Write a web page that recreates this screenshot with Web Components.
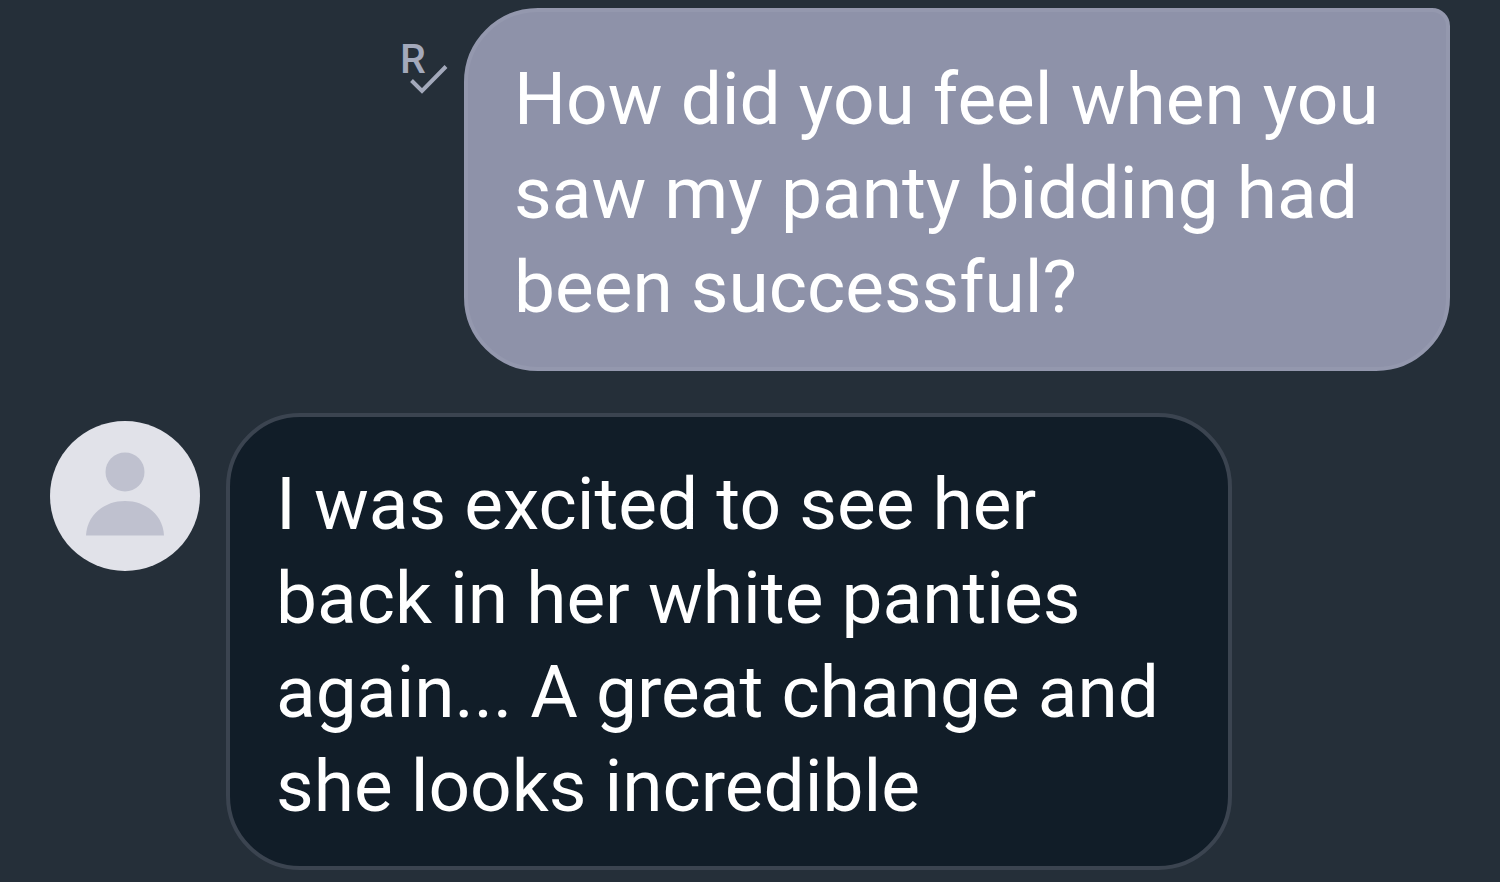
<!DOCTYPE html>
<html lang="en">
<head>
<meta charset="utf-8">
<meta name="viewport" content="width=device-width, initial-scale=1">
<title>Chat</title>
<style>
  body {
    margin: 0;
    background: #252f39;
    color: #fff;
    font-family: Roboto, sans-serif;
  }
</style>
</head>
<body>
<chat-thread>
  <chat-message type="sent">
    <read-receipt slot="aside"></read-receipt>
    How did you feel when you saw my panty bidding had been successful?
  </chat-message>
  <chat-message type="received">
    <user-avatar slot="aside"></user-avatar>
    I was excited to see her back in her white panties again... A great change and she looks incredible
  </chat-message>
</chat-thread>

<script>
class ChatThread extends HTMLElement {
  constructor() {
    super();
    this.attachShadow({ mode: "open" });
    this.shadowRoot.innerHTML = `
      <style>
        :host {
          display: block;
        }
        main {
          display: flex;
          flex-direction: column;
          gap: 42px;
          padding: 8px 50px 13px;
        }
      </style>
      <main><slot></slot></main>
    `;
  }
}
window.customElements.define("chat-thread", ChatThread);

class ChatMessage extends HTMLElement {
  constructor() {
    super();
    this.attachShadow({ mode: "open" });
    this.shadowRoot.innerHTML = `
      <style>
        :host {
          display: flex;
          align-items: flex-start;
        }
        :host([type="sent"]) {
          justify-content: flex-end;
          gap: 16px;
        }
        :host([type="received"]) {
          gap: 26px;
        }
        p {
          box-sizing: border-box;
          margin: 0;
          padding: 40px 46px 33px;
          border: 4px solid;
          border-radius: 74px;
          font-size: 73px;
          line-height: 94px;
        }
        :host([type="sent"]) p {
          max-width: 986px;
          background: #8e92a9;
          border-color: #9498ae;
          border-top-right-radius: 18px;
        }
        :host([type="received"]) p {
          max-width: 1006px;
          background: #111d28;
          border-color: #3b4450;
        }
      </style>
      <slot name="aside"></slot>
      <p><slot></slot></p>
    `;
  }
}
window.customElements.define("chat-message", ChatMessage);

class ReadReceipt extends HTMLElement {
  constructor() {
    super();
    this.attachShadow({ mode: "open" });
    this.shadowRoot.innerHTML = `
      <style>
        :host {
          display: block;
          flex: none;
          margin-top: 22px;
        }
        svg {
          display: block;
        }
        text {
          font-size: 41px;
          font-weight: 500;
          fill: #a3a9bb;
        }
      </style>
      <svg width="48" height="66" viewBox="0 0 48 66" role="img" aria-label="Read">
        <text x="0" y="43">R</text>
        <path d="M11.5 50.5 L22 61 L46 36.5" fill="none" stroke="#a3a9bb" stroke-width="4"/>
      </svg>
    `;
  }
}
window.customElements.define("read-receipt", ReadReceipt);

class UserAvatar extends HTMLElement {
  constructor() {
    super();
    this.attachShadow({ mode: "open" });
    this.shadowRoot.innerHTML = `
      <style>
        :host {
          display: block;
          flex: none;
          margin-top: 8px;
          width: 150px;
          height: 150px;
          border-radius: 50%;
          background: #e1e2e9;
        }
        svg {
          display: block;
        }
      </style>
      <svg width="150" height="150" viewBox="0 0 150 150" fill="#bfc1cf" role="img" aria-label="Contact">
        <circle cx="75" cy="51" r="19.5"/>
        <path d="M36 114.5 C37 94 54 80 75 80 S113 94 114 114.5 Z"/>
      </svg>
    `;
  }
}
window.customElements.define("user-avatar", UserAvatar);
</script>
</body>
</html>
